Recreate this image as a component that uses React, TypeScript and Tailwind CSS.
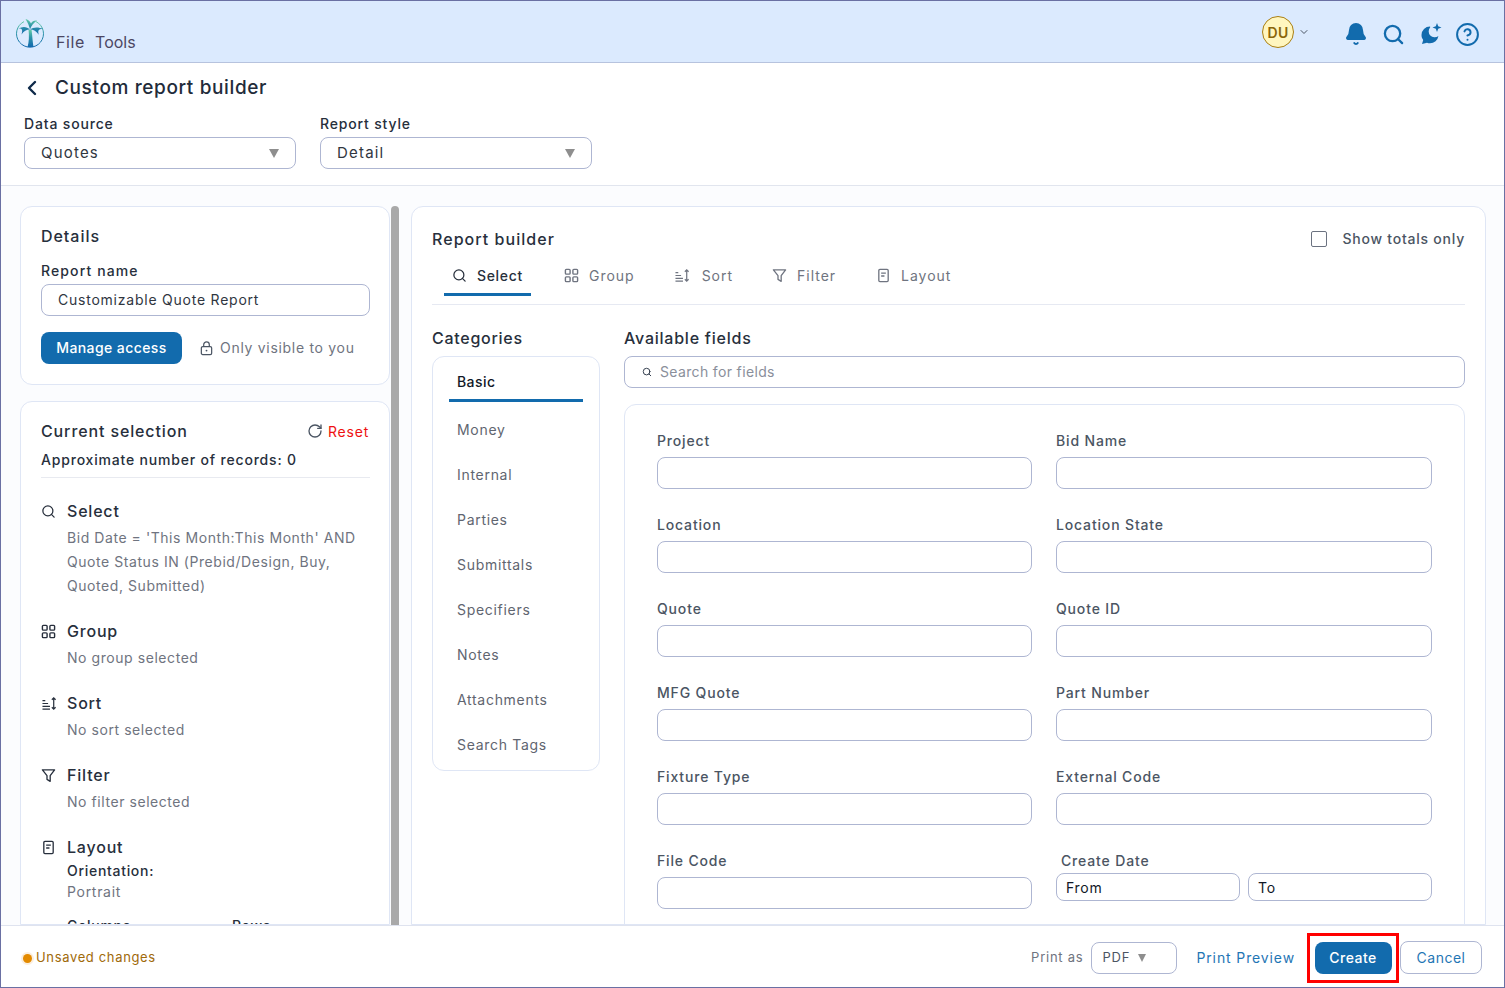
import { ChevronDown, ChevronLeft, CircleHelp, RotateCw, Search, Bell } from 'lucide-react'

function GroupIcon({ className = '' }: { className?: string }) {
  return (
    <svg viewBox="0 0 16 16" className={className} fill="none" stroke="currentColor" strokeWidth="1.5">
      <rect x="1.5" y="1.5" width="5" height="5" rx="1" />
      <rect x="9.5" y="1.5" width="5" height="5" rx="1" />
      <rect x="1.5" y="9.5" width="5" height="5" rx="1" />
      <rect x="9.5" y="9.5" width="5" height="5" rx="1" />
    </svg>
  )
}

function SortIcon({ className = '' }: { className?: string }) {
  return (
    <svg viewBox="0 0 17 16" className={className} fill="none" stroke="currentColor" strokeWidth="1.3">
      <path d="M1 14h8M1 11h8M1 8h6M1 5h3" />
      <path d="M13 2v12M11 4l2-2 2 2M11 12l2 2 2-2" />
    </svg>
  )
}

function FilterIcon({ className = '' }: { className?: string }) {
  return (
    <svg viewBox="0 0 16 16" className={className} fill="none" stroke="currentColor" strokeWidth="1.4" strokeLinejoin="round">
      <path d="M1.5 2h13L9.8 8.2v6l-3.4-2V8.2z" />
    </svg>
  )
}

function LayoutIcon({ className = '' }: { className?: string }) {
  return (
    <svg viewBox="0 0 16 16" className={className} fill="none" stroke="currentColor" strokeWidth="1.4">
      <rect x="3" y="1.5" width="10" height="13" rx="1.2" />
      <path d="M5.5 5.5h5M5.5 8.5h3.5" />
    </svg>
  )
}

function LockIcon({ className = '' }: { className?: string }) {
  return (
    <svg viewBox="0 0 16 16" className={className} fill="none" stroke="currentColor" strokeWidth="1.3">
      <rect x="2.5" y="6" width="11" height="8.5" rx="1.5" />
      <path d="M5 6V4a3 3 0 0 1 6 0v2" />
      <circle cx="8" cy="10.2" r="1" fill="currentColor" stroke="none" />
    </svg>
  )
}

function PalmLogo() {
  return (
    <svg viewBox="0 0 30 30" className="w-[30px] h-[30px]" fill="none">
      <defs>
        <linearGradient id="palm" x1="0" y1="0" x2="0" y2="1">
          <stop offset="0" stopColor="#62c9a6" />
          <stop offset="0.45" stopColor="#2c93a8" />
          <stop offset="1" stopColor="#1268ae" />
        </linearGradient>
      </defs>
      <path d="M9 3.6A13.5 13.5 0 1 0 21 3.6" stroke="url(#palm)" strokeWidth="1" />
      <path d="M12.6 29c1.4-5 1.6-11 1-17h3c.8 6 1 12 1.9 17z" fill="url(#palm)" />
      <path d="M15 11.5C12 8.5 7.500 8.200 3.500 10.500c3.500-.3 4.500 1 3 6 2.200-3.500 5-5 8.500-5zM15 11.500c3-2.500 8.500-2.800 13-.5-4.200-.2-5.500 1.200-4.200 5.800-2.300-3.500-5.300-5.300-8.800-5.300zM15 11.500C14.300 8 12.800 4.500 10.500 1c3 1 4.500 2.300 5.500 4.500C17 3.400 19 2.200 22 2.500c-3 2-5.700 5.300-7 9z" fill="url(#palm)" />
    </svg>
  )
}

function ChatSparkIcon() {
  return (
    <svg viewBox="0 0 24 24" className="w-[24px] h-[24px] text-[#126bad]" fill="currentColor">
      <path d="M11 4.500a8.500 8.500 0 0 0-8.500 8.500c0 2 .6 3.600 1.700 4.900L3 22l5-1.300c1 .4 2 .6 3 .6a8.500 8.500 0 0 0 8.400-7.300 6 6 0 0 1-8.200-8.700c.1-.3-.1-.8-.2-.8z" />
      <path d="M18 1l1.200 3.300L22.500 5.500l-3.300 1.200L18 10l-1.200-3.300-3.300-1.200 3.300-1.200z" />
    </svg>
  )
}

const categories = ['Money', 'Internal', 'Parties', 'Submittals', 'Specifiers', 'Notes', 'Attachments', 'Search Tags']

const fieldRows = [
  ['Project', 'Bid Name'],
  ['Location', 'Location State'],
  ['Quote', 'Quote ID'],
  ['MFG Quote', 'Part Number'],
  ['Fixture Type', 'External Code'],
]

function Field({ label }: { label: string }) {
  return (
    <div>
      <div className="h-[24px] pb-[10px] flex items-center text-[14px] font-medium text-[#4b5563] tracking-[0.06em]">{label}</div>
      <div className="h-[32px] rounded-lg border border-[#aeb6d2] bg-white" />
    </div>
  )
}

function Summary({ icon, title, text }: { icon: React.ReactNode; title: string; text: string }) {
  return (
    <div className="flex">
      <div className="w-[26px] shrink-0 pt-[5px] text-[#272f3c]">{icon}</div>
      <div>
        <div className="text-[16px] leading-[24px] font-medium text-[#272f3c] tracking-[0.05em]">{title}</div>
        <div className="mt-[3px] text-[14px] leading-[24px] text-[#6f7480] tracking-[0.04em]">{text}</div>
      </div>
    </div>
  )
}

export default function App() {
  return (
    <div className="h-[988px] w-[1505px] flex flex-col overflow-hidden border border-[#6a70a3] bg-[#fbfcfe] font-['Inter',sans-serif] text-[#272f3c]">
      {/* Header */}
      <div className="h-[62px] shrink-0 flex items-start justify-between bg-[#dbeafe] border-b border-[#b7c3de]">
        <div className="flex items-start pl-[14px] pt-[17px]">
          <PalmLogo />
          <div className="flex gap-[10px] ml-[11px] mt-[12px] text-[16px] leading-[24px] text-[#4b4763]">
            <span className="tracking-[0.04em]">File</span>
            <span>Tools</span>
          </div>
        </div>
        <div className="flex items-center pt-[15px] pr-[24px]">
          <div className="w-[32px] h-[32px] rounded-full bg-[#fff6bf] border border-[#a97f14] flex items-center justify-center text-[14px] font-semibold tracking-[0.02em] text-[#8a6508]">
            DU
          </div>
          <ChevronDown size={12} className="ml-[4px] text-[#4b5563]" />
          <div className="ml-[34px] flex items-center gap-[14px] pt-[4px]">
            <Bell size={24} className="text-[#126bad]" fill="currentColor" />
            <Search size={23} strokeWidth={2.4} className="text-[#126bad]" />
            <ChatSparkIcon />
            <CircleHelp size={25} strokeWidth={1.9} className="-ml-[2px] text-[#126bad]" />
          </div>
        </div>
      </div>

      {/* Page title and report pickers */}
      <div className="h-[123px] shrink-0 bg-white border-b border-[#e1e5ee] pl-[23px]">
        <div className="flex items-center h-[50px]">
          <ChevronLeft size={24} strokeWidth={2.4} className="-ml-[4px] text-[#0f2a4a]" />
          <h1 className="ml-[11px] text-[19px] font-medium tracking-[0.033em] text-[#222b3a]">Custom report builder</h1>
        </div>
        <div className="flex gap-[24px]">
          {[['Data source', 'Quotes'], ['Report style', 'Detail']].map(([label, value]) => (
            <div key={label} className="w-[272px]">
              <div className="h-[24px] pb-[4px] flex items-center text-[14px] font-medium tracking-[0.06em] text-[#272f3c]">{label}</div>
              <div className="h-[32px] flex items-center justify-between rounded-lg border border-[#aeb6d2] pl-[16px] pr-[16px] text-[15px] tracking-[0.08em] text-[#30363f]">
                {value}
                <span className="w-0 h-0 border-x-[5px] border-x-transparent border-t-[9px] border-t-[#8e8e8e]" />
              </div>
            </div>
          ))}
        </div>
      </div>

      {/* Body */}
      <div className="flex-1 min-h-0 flex overflow-hidden pt-[20px] pl-[19px] pr-[18px]">
        {/* Left column */}
        <div className="w-[370px] shrink-0 flex flex-col gap-[16px]">
          <div className="h-[179px] shrink-0 rounded-xl border border-[#dfe6f5] bg-white pl-[20px] pr-[19px] pt-[17px]">
            <div className="text-[16px] leading-[24px] font-medium tracking-[0.06em]">Details</div>
            <div className="mt-[11px] h-[24px] pb-[1px] flex items-center text-[14px] font-medium tracking-[0.08em]">Report name</div>
            <div className="mt-[1px] h-[32px] flex items-center rounded-lg border border-[#aeb6d2] pl-[16px] pb-[1px] text-[14px] tracking-[0.055em] text-[#30363f]">
              Customizable Quote Report
            </div>
            <div className="mt-[16px] flex items-center">
              <button className="h-[32px] w-[141px] pb-[1px] rounded-lg bg-[#126bad] text-[14px] font-medium tracking-[0.03em] text-white">Manage access</button>
              <LockIcon className="ml-[17px] w-[15px] h-[15px] text-[#4b5563]" />
              <span className="ml-[6px] pb-[1px] text-[14px] tracking-[0.05em] text-[#6f7480]">Only visible to you</span>
            </div>
          </div>

          <div className="flex-1 rounded-t-xl border border-[#dfe6f5] bg-white pl-[20px] pr-[19px] pt-[17px] overflow-hidden">
            <div className="flex items-center justify-between h-[24px] pr-[1px]">
              <span className="text-[16px] font-medium tracking-[0.055em]">Current selection</span>
              <span className="flex items-center gap-[5px] text-[14px] text-[#ee1111] tracking-[0.055em]">
                <RotateCw size={16} className="text-[#4b5563]" />
                Reset
              </span>
            </div>
            <div className="mt-[4px] h-[24px] flex items-center text-[14px] font-medium tracking-[0.058em] text-[#272f3c]">Approximate number of records: 0</div>
            <div className="mt-[6px] border-t border-[#e8eaf0]" />
            <div className="mt-[21px] flex flex-col gap-[21px]">
              <Summary
                icon={<Search size={15} />}
                title="Select"
                text="Bid Date = 'This Month:This Month' AND Quote Status IN (Prebid/Design, Buy, Quoted, Submitted)"
              />
              <Summary icon={<GroupIcon className="w-[15px] h-[15px]" />} title="Group" text="No group selected" />
              <Summary icon={<SortIcon className="w-[17px] h-[15px]" />} title="Sort" text="No sort selected" />
              <Summary icon={<FilterIcon className="w-[15px] h-[15px]" />} title="Filter" text="No filter selected" />
              <div className="flex">
                <div className="w-[26px] shrink-0 pt-[5px]"><LayoutIcon className="w-[15px] h-[15px]" /></div>
                <div>
                  <div className="text-[16px] leading-[24px] font-medium tracking-[0.05em]">Layout</div>
                  <div className="pt-[1px] text-[14px] leading-[21px] font-medium tracking-[0.05em]">Orientation:</div>
                  <div className="text-[14px] leading-[21px] text-[#6f7480] tracking-[0.05em]">Portrait</div>
                  <div className="mt-[13px] flex gap-[96px] text-[14px] leading-[21px] font-medium tracking-[0.05em]">
                    <span>Columns:</span>
                    <span>Rows:</span>
                  </div>
                </div>
              </div>
            </div>
          </div>
        </div>

        {/* Scroll thumb */}
        <div className="ml-[1px] w-[8px] shrink-0 bg-[#a9a9a9] rounded-t-sm" />

        {/* Report builder panel */}
        <div className="ml-[12px] flex-1 min-w-0 rounded-t-xl border border-[#dfe6f5] bg-white px-[20px] overflow-hidden">
          <div className="flex items-center justify-between pt-[19px] h-[45px]">
            <span className="text-[16px] font-medium tracking-[0.065em]">Report builder</span>
            <label className="mb-[1px] flex items-center gap-[15px] text-[14px] font-medium tracking-[0.055em] text-[#4b5563]">
              <span className="w-[16px] h-[16px] rounded-[2px] border border-[#6b7280] bg-white" />
              Show totals only
            </label>
          </div>
          <div className="h-[53px] flex items-end border-b border-[#e6e9f2] pl-[12px] text-[14px] tracking-[0.07em]">
            <div className="h-[40px] pt-[2px] w-[87px] mb-[8px] border-b-[3px] border-[#126bad] flex items-center justify-center gap-[10px] font-medium tracking-[0.05em]">
              <Search size={15} />
              Select
            </div>
            <div className="h-[40px] pt-[2px] mb-[8px] ml-[33px] border-b-[3px] border-transparent flex items-center gap-[10px] text-[#6f7480]">
              <GroupIcon className="w-[15px] h-[15px]" />
              Group
            </div>
            <div className="h-[40px] pt-[2px] mb-[8px] ml-[39px] border-b-[3px] border-transparent flex items-center gap-[11px] text-[#6f7480]">
              <SortIcon className="w-[17px] h-[15px]" />
              Sort
            </div>
            <div className="h-[40px] pt-[2px] mb-[8px] ml-[39px] border-b-[3px] border-transparent flex items-center gap-[10px] text-[#6f7480]">
              <FilterIcon className="w-[15px] h-[15px]" />
              Filter
            </div>
            <div className="h-[40px] pt-[2px] mb-[8px] ml-[40px] border-b-[3px] border-transparent flex items-center gap-[10px] text-[#6f7480]">
              <LayoutIcon className="w-[15px] h-[15px]" />
              Layout
            </div>
          </div>

          <div className="mt-[21px] flex gap-[24px]">
            <div className="w-[168px] shrink-0">
              <div className="h-[24px] flex items-center text-[16px] font-medium tracking-[0.045em]">Categories</div>
              <div className="mt-[6px] h-[415px] rounded-xl border border-[#dfe6f5] bg-white px-[16px]">
                <div className="h-[45px] pt-[6px] border-b-[3px] border-[#126bad] pl-[8px] flex items-center text-[14px] font-medium tracking-[0.03em] text-[#111827]">
                  Basic
                </div>
                <div className="pt-[5px]">
                  {categories.map((c) => (
                    <div key={c} className="h-[45px] pl-[8px] flex items-center text-[14px] tracking-[0.05em] text-[#5f6570]">
                      {c}
                    </div>
                  ))}
                </div>
              </div>
            </div>

            <div className="flex-1 min-w-0">
              <div className="h-[24px] flex items-center text-[16px] font-medium tracking-[0.048em]">Available fields</div>
              <div className="mt-[6px] h-[32px] flex items-center rounded-lg border border-[#aeb6d2] pl-[17px] pb-[1px] text-[14px] tracking-[0.025em] text-[#8a8f9b]">
                <Search size={10} strokeWidth={2.4} className="text-[#374151]" />
                <span className="ml-[8px]">Search for fields</span>
              </div>
              <div className="mt-[16px] h-[600px] rounded-xl border border-[#dfe6f5] bg-white pl-[32px] pr-[32px] pt-[28px]">
                <div className="grid grid-cols-[375px_376px] gap-x-[24px] gap-y-[28px]">
                  {fieldRows.flat().map((f) => (
                    <Field key={f} label={f} />
                  ))}
                  <Field label="File Code" />
                  <div className="-mt-[4px]">
                    <div className="h-[24px] pl-[5px] pb-[1px] flex items-center text-[14px] font-medium text-[#4b5563] tracking-[0.06em]">Create Date</div>
                    <div className="flex gap-[8px]">
                      <div className="flex-1 h-[28px] flex items-center pl-[9px] rounded-lg border border-[#aeb6d2] text-[14px] tracking-[0.05em] text-[#111827]">From</div>
                      <div className="flex-1 h-[28px] flex items-center pl-[9px] rounded-lg border border-[#aeb6d2] text-[14px] tracking-[0.05em] text-[#111827]">To</div>
                    </div>
                  </div>
                </div>
              </div>
            </div>
          </div>
        </div>
      </div>

      {/* Footer */}
      <div className="h-[62px] shrink-0 flex items-center justify-between border-t border-[#dfe3ef] bg-white pt-[2px] pl-[21px] pr-[22px]">
        <div className="mt-[1px] flex items-center text-[13px] tracking-[0.05em] text-[#a06a0a]">
          <span className="w-[9px] h-[9px] mx-[1px] rounded-full bg-[#e38a00] ring-2 ring-[#fbeedd]" />
          <span className="ml-[3px]">Unsaved changes</span>
        </div>
        <div className="flex items-center">
          <span className="text-[13px] tracking-[0.058em] text-[#6f7480]">Print as</span>
          <div className="ml-[8px] w-[86px] h-[32px] flex items-center rounded-lg border border-[#aeb6d2] pl-[10px] text-[13px] tracking-[0.06em] text-[#4b5563]">
            PDF
            <span className="ml-[8px] w-0 h-0 border-x-[4px] border-x-transparent border-t-[8px] border-t-[#8e8e8e]" />
          </div>
          <span className="ml-[19px] text-[14px] tracking-[0.063em] text-[#1f76b5]">Print Preview</span>
          <div className="ml-[12px] border-[3px] border-[#ff0000] h-[50px] w-[92px] flex items-center justify-center">
            <button className="h-[32px] w-[77px] rounded-lg bg-[#126bad] text-[14px] font-medium tracking-[0.035em] text-white">Create</button>
          </div>
          <button className="ml-[1px] h-[33px] w-[82px] rounded-lg border border-[#aeb6d2] text-[14px] tracking-[0.035em] text-[#1f76b5]">Cancel</button>
        </div>
      </div>
    </div>
  )
}
